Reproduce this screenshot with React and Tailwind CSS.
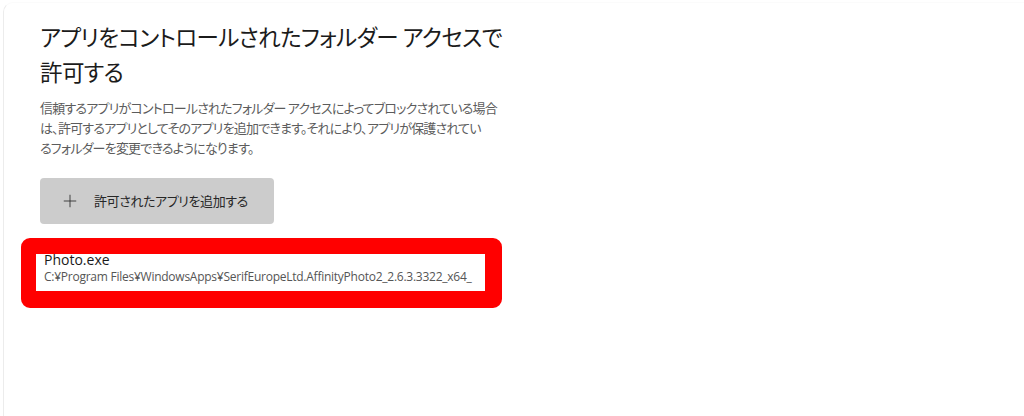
import { Plus } from 'lucide-react'

const jp = "font-['Noto_Sans_CJK_JP','Noto_Sans',sans-serif] [font-feature-settings:'palt']"

export default function App() {
  return (
    <div className={`w-[1024px] h-[416px] bg-white overflow-hidden ${jp}`}>
      {/* settings card */}
      <div className="ml-[3px] h-[430px] mt-[2px] border-l border-t border-l-[#ececec] border-t-[#fbfbfb] rounded-tl-[10px] pl-[17px] pt-[16px]">
        <h1 className="ml-[19px] text-[22.5px] tracking-[-0.6px] leading-[35px] text-[#1b1b1b] font-normal">
          アプリをコントロールされたフォルダー アクセスで
          <br />
          許可する
        </h1>
        <p className="ml-[19px] mt-[9px] text-[13px] tracking-[-0.8px] leading-[20px] text-[#5c5c5c]">
          信頼するアプリがコントロールされたフォルダー アクセスによってブロックされている場合
          <br />
          は、許可するアプリとしてそのアプリを追加できます。それにより、アプリが保護されてい
          <br />
          るフォルダーを変更できるようになります。
        </p>

        <button className="ml-[19px] mt-[20px] w-[234px] h-[46px] bg-[#cccccc] rounded-[4px] flex items-center pl-[20px] text-[#262626]">
          <Plus className="w-[20px] h-[20px]" strokeWidth={1} />
          <span className="ml-[14px] text-[13px] tracking-[-0.4px]">許可されたアプリを追加する</span>
        </button>

        {/* highlighted entry */}
        <div className="mt-[14px] w-[481px] h-[70px] border-[16px] border-r-[17px] border-b-[17px] border-l-[15px] border-[#ff0000] rounded-[9px] bg-white">
          <div className="pl-[8px] -mt-[3px] font-['Open_Sans','Noto_Sans_CJK_JP',sans-serif]">
            <div className="text-[14px] leading-[18px] text-[#1b1b1b]">Photo.exe</div>
            <div className="text-[12px] tracking-[-0.25px] leading-[16px] text-[#555555] whitespace-nowrap">
              C:¥Program Files¥WindowsApps¥SerifEuropeLtd.AffinityPhoto2_2.6.3.3322_x64_
            </div>
          </div>
        </div>
      </div>
    </div>
  )
}
